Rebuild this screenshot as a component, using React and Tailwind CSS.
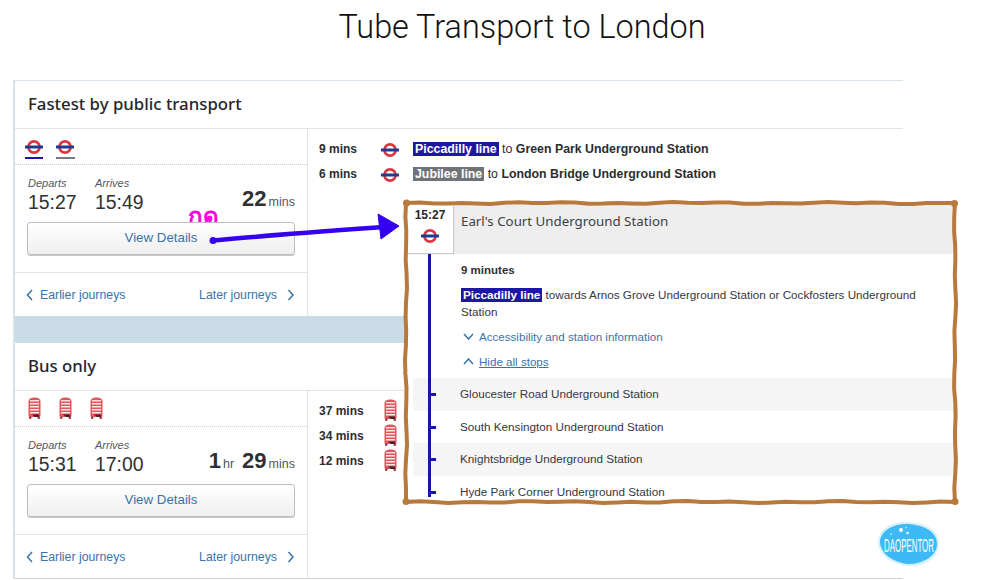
const sans = { fontFamily: '"Liberation Sans", Arial, sans-serif' };

function Roundel({ className = '' }) {
  return (
    <svg className={className} width="18" height="14" viewBox="0 0 18 14">
      <circle cx="9" cy="7" r="5.6" fill="#fff" stroke="#d9363e" strokeWidth="2.6" />
      <rect x="0" y="5.5" width="18" height="3" fill="#1f3a93" />
    </svg>
  );
}

function BusIcon() {
  return (
    <svg width="13" height="22" viewBox="0 0 13 22">
      <path d="M0.5 5 C0.5 1.500 3 0.500 6.500 0.500 C10 0.500 12.500 1.500 12.500 5 V18.500 C12.500 19.500 12 20 11 20 H2 C1 20 0.500 19.500 0.500 18.500 Z" fill="#e0565c" />
      <rect x="2" y="3" width="9" height="1.500" fill="#f9dcdd" />
      <rect x="2" y="6" width="9" height="1.500" fill="#fbe7e8" />
      <rect x="2" y="9" width="9" height="1.500" fill="#fbe7e8" />
      <rect x="2" y="12" width="9" height="1.500" fill="#fbe7e8" />
      <rect x="2" y="15" width="9" height="1.500" fill="#fbe7e8" />
      <path d="M4 17.500 H11 V20 H7 Z" fill="#3a2226" />
      <rect x="1" y="19.500" width="2.500" height="2.500" rx="1" fill="#a8353a" />
      <rect x="9.500" y="19.500" width="2.500" height="2.500" rx="1" fill="#a8353a" />
    </svg>
  );
}

function Chevron({ dir }) {
  const d = {
    left: 'M6 1 L1.500 6 L6 11',
    right: 'M1.500 1 L6 6 L1.500 11',
    down: 'M1 1 L5.500 6 L10 1',
    up: 'M1 6 L5.500 1 L10 6',
  }[dir];
  const vertical = dir === 'up' || dir === 'down';
  return (
    <svg width={vertical ? 11 : 8} height={vertical ? 7 : 12} fill="none" stroke="#3a73a8" strokeWidth="1.500">
      <path d={d} />
    </svg>
  );
}

function LinePill({ color, children }) {
  return (
    <span className={`${color} inline-block h-[14px] px-[2px] text-white font-bold leading-[14px]`}>{children}</span>
  );
}

function Journey({ icons, depart, arrive, duration }) {
  return (
    <div className="w-[293px] shrink-0 border-r border-[#e3e3e3] flex flex-col">
      <div className="h-[36px] border-b border-dotted border-[#cfcfcf]">{icons}</div>
      <div className="flex pl-[13px] pr-[12px] pt-[12px] h-[49px] text-[#2f3033]">
        <div className="w-[67px]">
          <div className="text-[11px] italic leading-[13px] text-[#55585c]">Departs</div>
          <div className="text-[19.4px] leading-[24px]">{depart}</div>
        </div>
        <div>
          <div className="text-[11px] italic leading-[13px] text-[#55585c]">Arrives</div>
          <div className="text-[19.4px] leading-[24px]">{arrive}</div>
        </div>
        <div className="ml-auto self-end mb-[2px] flex items-baseline h-[27px]">{duration}</div>
      </div>
      <div className="relative mx-[12px] mt-[8px] h-[33px] w-[268px] pb-[2px] rounded-[3px] border border-[#bdbdbd] bg-gradient-to-b from-white to-[#efefef] shadow-[0_1px_0_#c9c9c9] flex items-center justify-center text-[13.3px] text-[#3a73a8]">
        View Details
      </div>
      <div className="mt-[17px] flex-1 border-t border-[#e3e3e3] flex items-center justify-between pt-[1px] pl-[11px] pr-[12px] text-[12.3px] text-[#3a73a8]">
        <div className="flex items-center gap-[6px]">
          <Chevron dir="left" />
          <span>Earlier journeys</span>
        </div>
        <div className="flex items-center gap-[10px]">
          <span>Later journeys</span>
          <Chevron dir="right" />
        </div>
      </div>
    </div>
  );
}

function Duration({ big, unit }) {
  return (
    <>
      <span className="text-[22px] font-bold leading-[27px]">{big}</span>
      <span className="ml-[2px] text-[12.5px] text-[#55585c]">{unit}</span>
    </>
  );
}

function Heading({ children }) {
  return (
    <div
      className="h-[48px] border-b border-[#e3e3e3] pl-[13px] pb-[2px] flex items-center text-[16.8px] font-medium text-[#24272b]"
      style={{ fontFamily: '"Noto Sans", sans-serif' }}
    >
      {children}
    </div>
  );
}

const stops = [
  { name: 'Gloucester Road Underground Station', bg: 'bg-[#f5f5f5]' },
  { name: 'South Kensington Underground Station', bg: 'bg-white' },
  { name: 'Knightsbridge Underground Station', bg: 'bg-[#f5f5f5]' },
  { name: 'Hyde Park Corner Underground Station', bg: 'bg-white' },
];

function StationPanel() {
  return (
    <div className="absolute left-[407px] top-[205px] h-[296px] w-[547px] overflow-hidden bg-white text-[#35383c]">
      <div className="flex h-[49px] bg-[#eeeeee]">
        <div className="w-[46px] h-[48px] bg-white shadow-[1px_1px_1px_#c8c8c8] flex flex-col items-center pt-[3px]">
          <div className="text-[12px] font-bold leading-[15px] text-[#26282b]">15:27</div>
          <Roundel className="mt-[6px]" />
        </div>
        <div
          className="ml-[8px] pt-[6px] text-[13.3px] leading-[20px] text-[#3c3f43]"
          style={{ fontFamily: '"Noto Sans", sans-serif' }}
        >
          Earl's Court Underground Station
        </div>
      </div>
      <div className="absolute z-10 left-[21px] top-[49px] bottom-[4px] w-[3px] bg-[#1b12a8]" />
      <div className="pl-[54px] pr-[30px]">
        <div className="pt-[9px] text-[11.5px] font-bold leading-[15px] text-[#2f3033]">9 minutes</div>
        <div className="mt-[8px] text-[11.7px] leading-[17px]">
          <LinePill color="bg-[#1c17a6]">Piccadilly line</LinePill> towards Arnos Grove Underground Station or
          Cockfosters Underground Station
        </div>
        <div className="mt-[8px] flex items-center gap-[5px] pl-[2px] h-[17px] text-[11.6px] text-[#3a73a8]">
          <Chevron dir="down" />
          <span>Accessibility and station information</span>
        </div>
        <div className="mt-[8px] flex items-center gap-[5px] pl-[2px] h-[17px] text-[11.6px] text-[#3a73a8]">
          <Chevron dir="up" />
          <span className="underline">Hide all stops</span>
        </div>
      </div>
      <div className="mt-[8px] pl-[6px]">
        {stops.map((stop) => (
          <div key={stop.name} className={`${stop.bg} relative h-[32.67px] pb-[1px] pl-[47px] flex items-center text-[11.7px]`}>
            <span className="absolute left-[18px] top-[15px] h-[3px] w-[5px] bg-[#1b12a8]" />
            {stop.name}
          </div>
        ))}
      </div>
    </div>
  );
}

// wobbly marker stroke between two points
function wobble(x1, y1, x2, y2, seed) {
  const len = Math.hypot(x2 - x1, y2 - y1);
  const steps = Math.round(len / 14);
  const nx = (y2 - y1) / len;
  const ny = (x1 - x2) / len;
  const pts = [];
  for (let i = 0; i <= steps; i++) {
    const t = i / steps;
    const off = i === 0 || i === steps ? 0 : Math.sin(i * 1.7 + seed) * 0.6 + Math.sin(i * 0.6 + seed * 2) * 0.5;
    pts.push(`${(x1 + (x2 - x1) * t + nx * off).toFixed(1)} ${(y1 + (y2 - y1) * t + ny * off).toFixed(1)}`);
  }
  return 'M' + pts.join(' L');
}

// pen annotations drawn on top of the screenshot
function Annotations() {
  const edges = [
    wobble(406, 203, 955, 203, 1),
    wobble(955, 203, 955, 502, 2),
    wobble(955, 502, 406, 502, 3),
    wobble(406, 502, 406, 203, 4),
  ];
  return (
    <svg className="absolute z-20 left-0 top-0 pointer-events-none" width="993" height="580" fill="none">
      {edges.map((d) => (
        <path key={d} d={d} stroke="#b87a3c" strokeWidth="4" strokeLinejoin="round" />
      ))}
      <circle cx="406.500" cy="203" r="3.500" fill="#b87a3c" />
      <circle cx="954.500" cy="203.500" r="3.500" fill="#b87a3c" />
      <circle cx="406" cy="501.500" r="3.500" fill="#b87a3c" />
      <circle cx="955" cy="501.500" r="3.500" fill="#b87a3c" />
      <path d="M213 240.500 C 260 236 330 231 385 227" stroke="#3500f0" strokeWidth="4.500" strokeLinecap="round" />
      <circle cx="213" cy="240.500" r="3.500" fill="#3500f0" />
      <path d="M378 214 L399 226 L381 239 Z" fill="#3500f0" stroke="#3500f0" strokeLinejoin="round" />
    </svg>
  );
}

function Logo() {
  return (
    <svg className="absolute left-[876px] top-[520px]" width="66" height="48" viewBox="0 0 66 48">
      <path
        d="M2 20 C 4 8 16 2 30 2 C 46 2 63 8 63 24 C 63 38 48 47 32 46 C 18 45 1 36 2 20 Z"
        fill="#d6f0fc"
      />
      <path
        d="M4 20 C 6 10 18 4 30 4 C 44 4 61 10 61 24 C 61 36 47 44 32 44 C 19 43 3 34 4 20 Z"
        fill="#3db9f6"
      />
      <circle cx="25" cy="10" r="2" fill="#fff" />
      <circle cx="31.500" cy="13" r="1.300" fill="#e8f8ff" />
      <circle cx="30" cy="7.500" r="1" fill="#a8e0fb" />
      <circle cx="15" cy="14" r="0.800" fill="#fff" />
      <text transform="translate(8 32) scale(0.44 1)" fill="#fff" fontSize="18" style={sans}>
        DAOPENTOR
      </text>
    </svg>
  );
}

export default function App() {
  return (
    <div className="relative h-[580px] w-[993px] overflow-hidden bg-white" style={sans}>
      <h1
        className="h-[80px] w-[1044px] pt-[7px] text-center text-[32.4px] font-light leading-[40px] text-[#111111]"
        style={{ fontFamily: 'Roboto, sans-serif' }}
      >
        Tube Transport to London
      </h1>

      <div className="ml-[13px] w-[890px] h-[499px] border-t border-l-2 border-[#d5e2ea] flex flex-col">
        <Heading>Fastest by public transport</Heading>
        <div className="flex h-[187px] relative">
          {/* กด sits behind the button */}
          <div className="absolute left-[173px] top-[76px] text-[24px] font-bold leading-[24px] text-[#ff00e0]">กด</div>
          <Journey
            icons={
              <div className="flex pl-[10px] gap-[13px] pt-[11px]">
                <div className="w-[18px] h-[19px] border-b-2 border-[#1c17a6]"><Roundel /></div>
                <div className="w-[19px] h-[19px] border-b-2 border-[#777b80]"><Roundel /></div>
              </div>
            }
            depart="15:27"
            arrive="15:49"
            duration={<Duration big="22" unit="mins" />}
          />
          <div className="flex-1 pl-[11px] pt-[13px] text-[12.35px] text-[#2b2d31]">
            <div className="flex h-[25px] items-start">
              <span className="w-[62px] text-[12px] font-bold leading-[15px]">9 mins</span>
              <Roundel className="mt-[1px]" />
              <span className="ml-[14px] leading-[15px]">
                <LinePill color="bg-[#1c17a6]">Piccadilly line</LinePill> to <b>Green Park Underground Station</b>
              </span>
            </div>
            <div className="flex h-[25px] items-start">
              <span className="w-[62px] text-[12px] font-bold leading-[15px]">6 mins</span>
              <Roundel className="mt-[1px]" />
              <span className="ml-[14px] leading-[15px]">
                <LinePill color="bg-[#6f7478]">Jubilee line</LinePill> to <b>London Bridge Underground Station</b>
              </span>
            </div>
          </div>
        </div>
        <div className="h-[27px] bg-[#c9dbe6]" />
        <Heading>Bus only</Heading>
        <div className="flex flex-1 border-b border-[#d0d0d0]">
          <Journey
            icons={
              <div className="flex pl-[13px] gap-[18px] pt-[6px]">
                <BusIcon />
                <BusIcon />
                <BusIcon />
              </div>
            }
            depart="15:31"
            arrive="17:00"
            duration={
              <>
                <Duration big="1" unit="hr" />
                <span className="w-[8px]" />
                <Duration big="29" unit="mins" />
              </>
            }
          />
          <div className="flex-1 pl-[11px] pt-[13px] text-[12px] font-bold text-[#2b2d31]">
            {['37 mins', '34 mins', '12 mins'].map((t) => (
              <div key={t} className="flex h-[25px] items-start">
                <span className="w-[65px] leading-[15px]">{t}</span>
                <div className="-mt-[5px]"><BusIcon /></div>
              </div>
            ))}
          </div>
        </div>
      </div>

      <StationPanel />
      <Annotations />
      <Logo />
    </div>
  );
}
